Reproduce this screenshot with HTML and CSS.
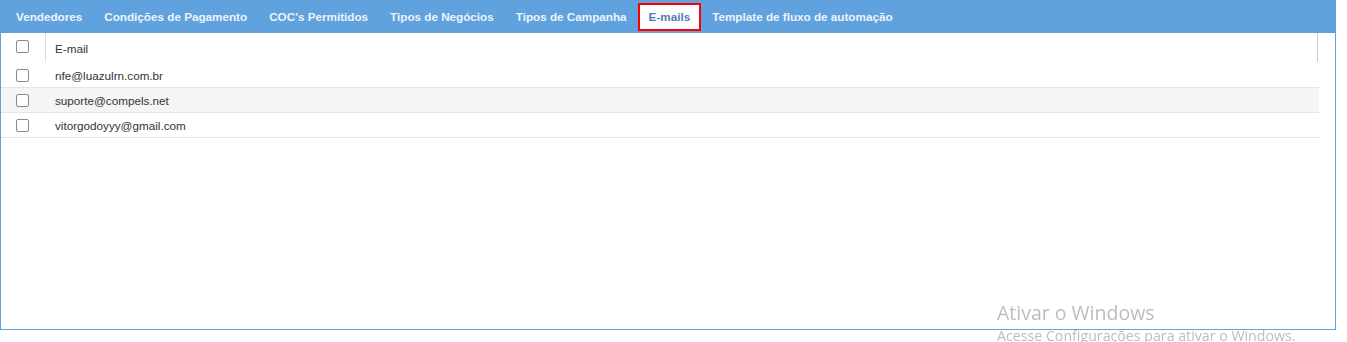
FILE: index.html
```html
<!DOCTYPE html>
<html>
<head>
<meta charset="utf-8"/>
<title>E-mails</title>
<link rel="stylesheet" href="styles.css">
</head>
<body>

<div class="frame">
  <ul class="tabs">
    <li class="tab">Vendedores</li>
    <li class="tab">Condições de Pagamento</li>
    <li class="tab">COC's Permitidos</li>
    <li class="tab">Tipos de Negócios</li>
    <li class="tab">Tipos de Campanha</li>
    <li class="tab active">E-mails</li>
    <li class="tab">Template de fluxo de automação</li>
  </ul>

  <div class="grid">
    <div class="row head">
      <div class="cell check"><span class="box"></span></div>
      <div class="cell text">E-mail</div>
    </div>
    <div class="row">
      <div class="cell check"><span class="box"></span></div>
      <div class="cell text">nfe@luazulrn.com.br</div>
    </div>
    <div class="row alt">
      <div class="cell check"><span class="box"></span></div>
      <div class="cell text">suporte@compels.net</div>
    </div>
    <div class="row">
      <div class="cell check"><span class="box"></span></div>
      <div class="cell text">vitorgodoyyy@gmail.com</div>
    </div>
  </div>
</div>

<div class="watermark">
  <div class="wm-title">Ativar o Windows</div>
  <div class="wm-sub">Acesse Configurações para ativar o Windows.</div>
</div>

</body>
</html>
```

FILE: styles.css
```css
body {
  font-family: "Liberation Sans", Arial, sans-serif;
  margin: 0px;
  padding: 0px;
  background: #fff;
}

.frame {
  width: 1334px;
  height: 329px;
  border: 1px solid #5fa2dd;
  border-top: 0px;
}

.tabs {
  list-style: none;
  margin: 0px;
  padding: 3px 0px 0px 5px;
  height: 30px;
  background: #5fa2dd;
  display: flex;
  align-items: flex-start;
  margin-left: -1px;
  margin-right: -1px;
}

.tab {
  font-size: 11.7px;
  font-weight: bold;
  color: #eef3fa;
  padding: 0px 11px;
  height: 28px;
  line-height: 28px;
  box-sizing: border-box;
}

.tab.active {
  background: #fff;
  color: #4f7cb5;
  border: 2px solid #f00;
  line-height: 24px;
  padding: 0px 9px;
}

.grid {
  width: 1318px;
}

.row {
  display: flex;
  height: 24px;
  border-bottom: 1px solid #e5e5e5;
  font-size: 11.7px;
  color: #333;
}

.row.head {
  height: 29px;
  border-bottom: 0px;
  border-right: 1px solid #ccc;
  width: 1316px;
  margin-bottom: 1px;
}

.row.alt {
  background: #f5f5f5;
}

.cell {
  display: flex;
  align-items: center;
}

.cell.check {
  width: 45px;
  padding-left: 15px;
  box-sizing: border-box;
}

.head .cell.check {
  border-right: 1px solid #ddd;
}

.cell.text {
  padding-left: 9px;
  padding-top: 1px;
}

.box {
  display: block;
  width: 11px;
  height: 11px;
  border: 1px solid #8a8a8a;
  border-radius: 2px;
  background: #fff;
}

.head .box {
  margin-top: -3px;
}

.watermark {
  position: fixed;
  left: 997px;
  top: 300px;
  color: #bdbdbd;
  font-family: "Open Sans", "Noto Sans", sans-serif;
}

.wm-title {
  font-size: 19.5px;
  line-height: 26px;
}

.wm-sub {
  font-size: 14.2px;
  line-height: 20px;
}
```
